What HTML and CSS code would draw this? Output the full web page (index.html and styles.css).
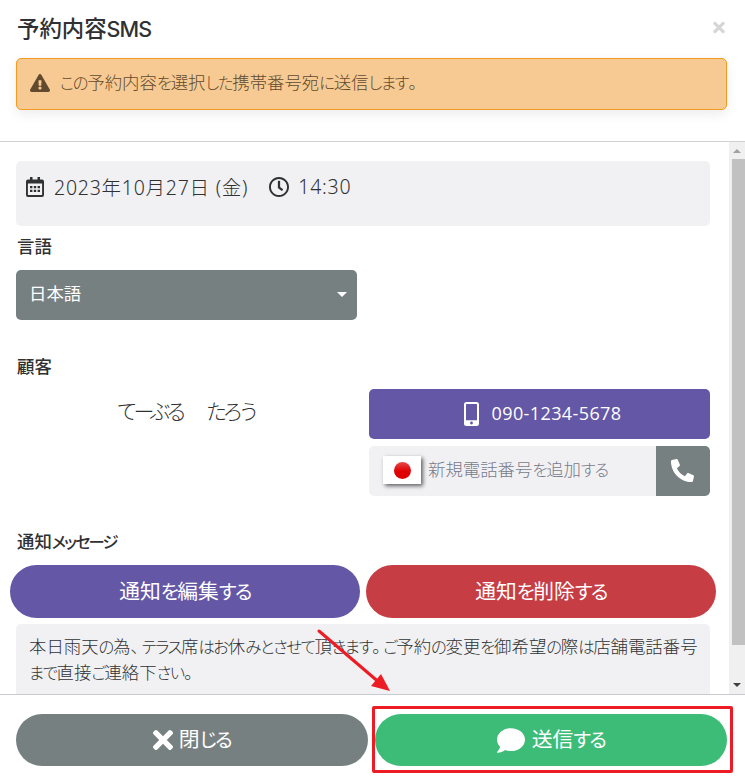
FILE: index.html
```html
<!DOCTYPE html>
<html lang="ja">
<head>
<meta charset="utf-8">
<title>予約内容SMS</title>
<link rel="stylesheet" href="styles.css">
</head>
<body>
<div class="modal">
  <header class="modal-header">
    <div class="title-row">
      <h1 class="title">予約内容<span class="latin">SMS</span></h1>
      <button class="close" aria-label="閉じる"><svg viewBox="0 0 352 512"><path d="M242.72 256l100.07-100.07c12.28-12.28 12.28-32.19 0-44.48l-22.24-22.24c-12.28-12.28-32.19-12.28-44.48 0L176 189.28 75.93 89.21c-12.28-12.28-32.19-12.28-44.48 0L9.21 111.45c-12.28 12.28-12.28 32.19 0 44.48L109.28 256 9.21 356.07c-12.28 12.28-12.28 32.19 0 44.48l22.24 22.24c12.28 12.28 32.2 12.28 44.48 0L176 322.72l100.07 100.07c12.28 12.28 32.2 12.28 44.48 0l22.24-22.24c12.28-12.28 12.28-32.19 0-44.48L242.72 256z"/></svg></button>
    </div>
    <div class="alert">
      <svg class="alert-icon" viewBox="0 0 576 512"><path d="M569.517 440.013C587.975 472.007 564.806 512 527.94 512H48.054c-36.937 0-59.999-40.055-41.577-71.987L246.423 23.985c18.467-32.009 64.72-31.951 83.154 0l239.94 416.028zM288 354c-25.405 0-46 20.595-46 46s20.595 46 46 46 46-20.595 46-46-20.595-46-46-46zm-43.673-165.346l7.418 136c.347 6.364 5.609 11.346 11.982 11.346h48.546c6.373 0 11.635-4.982 11.982-11.346l7.418-136c.375-6.874-5.098-12.654-11.982-12.654h-63.383c-6.884 0-12.356 5.78-11.981 12.654z"/></svg>
      <span class="alert-text"><span class="k">この</span>予約内容<span class="k">を</span>選択<span class="k">した</span>携帯番号宛<span class="k">に</span>送信<span class="k">します</span><span class="p">。</span></span>
    </div>
  </header>

  <div class="modal-body">
    <main class="content">
      <div class="datetime">
        <svg class="calendar" viewBox="0 0 18 20"><path fill-rule="evenodd" d="M4 0h2.500v2.500h5V0H14v2.500h2A2 2 0 0 1 18 4.500V18a2 2 0 0 1-2 2H2a2 2 0 0 1-2-2V4.500a2 2 0 0 1 2-2h2zM1.900 6.500v11.200q0 .4.400.4h13.400q.4 0 .4-.4V6.500z"/><path d="M4 9h2.400v2.200H4zM7.800 9h2.400v2.200H7.800zM11.600 9H14v2.200h-2.400zM4 12.800h2.400V15H4zM7.800 12.800h2.400V15H7.800zM11.600 12.800H14V15h-2.400z"/></svg>
        <span class="date">2023年10月27日 (金)</span>
        <svg class="clock" viewBox="8 8 496 496"><path d="M256 8C119 8 8 119 8 256s111 248 248 248 248-111 248-248S393 8 256 8zm0 448c-110.500 0-200-89.500-200-200S145.500 56 256 56s200 89.500 200 200-89.500 200-200 200zm61.800-104.400l-84.900-61.700c-3.100-2.300-4.900-5.900-4.900-9.700V116c0-6.600 5.400-12 12-12h32c6.600 0 12 5.400 12 12v141.700l66.800 48.600c5.400 3.900 6.500 11.400 2.600 16.800L334.600 349c-3.900 5.300-11.400 6.500-16.800 2.600z"/></svg>
        <span class="time">14:30</span>
      </div>

      <h2 class="label language-label">言語</h2>
      <div class="select"><span>日本語</span><i class="caret"></i></div>

      <h2 class="label customer-label">顧客</h2>
      <div class="customer">
        <div class="name"><span class="family">てーぶる</span>　<span class="given">たろう</span></div>
        <div class="phones">
          <button class="phone-button">
            <svg class="mobile" viewBox="0 0 15 24"><path fill-rule="evenodd" d="M2.500 0h10A2.500 2.500 0 0 1 15 2.500v19a2.500 2.500 0 0 1-2.500 2.500h-10A2.500 2.500 0 0 1 0 21.500v-19A2.500 2.500 0 0 1 2.500 0zM2 2.600v15.200q0 .5.500.5h10q.5 0 .5-.5V2.600q0-.5-.5-.5h-10q-.5 0-.5.5zM7.500 19.600a1.400 1.400 0 1 0 0 2.800 1.400 1.400 0 0 0 0-2.800z"/></svg>
            <span class="number">090-1234-5678</span>
          </button>
          <div class="phone-input">
            <div class="flag"><i></i></div>
            <span class="placeholder">新規電話番号<span class="k">を</span>追加<span class="k">する</span></span>
            <button class="call"><svg viewBox="0 0 512 512"><path transform="matrix(-1 0 0 1 512 0)" d="M493.400 24.600l-104-24c-11.300-2.600-22.900 3.300-27.500 13.900l-48 112c-4.200 9.800-1.400 21.300 6.900 28l60.600 49.600c-36 76.700-98.900 140.500-177.200 177.200l-49.600-60.600c-6.800-8.300-18.200-11.100-28-6.900l-112 48C3.900 366.500-2 378.100.6 389.400l24 104C27.100 504.200 36.700 512 48 512c256.100 0 464-207.500 464-464 0-11.200-7.700-20.900-18.600-23.400z"/></svg></button>
          </div>
        </div>
      </div>

      <h2 class="label message-label">通知<span class="kata">メッセージ</span></h2>
      <div class="actions">
        <button class="pill edit"><span>通知<span class="k">を</span>編集<span class="k">する</span></span></button>
        <button class="pill delete"><span>通知<span class="k">を</span>削除<span class="k">する</span></span></button>
      </div>
      <div class="message">
        <p>本日雨天<span class="k">の</span>為<span class="p">、</span><span class="k">テラス</span>席<span class="k">はお</span>休<span class="k">みとさせて</span>頂<span class="k">きます</span><span class="p">。</span><span class="k">ご</span>予約<span class="k">の</span>変更<span class="k">を</span>御希望<span class="k">の</span>際<span class="k">は</span>店舗電話番号</p>
        <p><span class="k">まで</span>直接<span class="k">ご</span>連絡下<span class="k">さい</span><span class="p">。</span></p>
      </div>
    </main>
    <div class="scrollbar">
      <i class="arrow-up"></i>
      <div class="thumb"></div>
      <i class="arrow-down"></i>
    </div>
  </div>

  <footer class="modal-footer">
    <button class="pill dismiss"><svg viewBox="0 80 352 352"><path d="M242.72 256l100.07-100.07c12.28-12.28 12.28-32.19 0-44.48l-22.24-22.24c-12.28-12.28-32.19-12.28-44.48 0L176 189.28 75.93 89.21c-12.28-12.28-32.19-12.28-44.48 0L9.21 111.45c-12.28 12.28-12.28 32.19 0 44.48L109.28 256 9.21 356.07c-12.28 12.28-12.28 32.19 0 44.48l22.24 22.24c12.28 12.28 32.2 12.28 44.48 0L176 322.72l100.07 100.07c12.28 12.28 32.2 12.28 44.48 0l22.24-22.24c12.28-12.28 12.28-32.19 0-44.48L242.72 256z"/></svg><span>閉<span class="k">じる</span></span></button>
    <button class="pill send"><svg viewBox="0 32 512 448"><path d="M256 32C114.600 32 0 125.100 0 240c0 49.600 21.400 95 57 130.700C44.500 421.100 2.700 466 2.200 466.500c-2.200 2.300-2.800 5.700-1.500 8.700S4.800 480 8 480c66.300 0 116-31.800 140.600-51.400 32.700 12.300 69 19.400 107.400 19.400 141.400 0 256-93.100 256-208S397.400 32 256 32z"/></svg><span>送信<span class="k">する</span></span></button>
  </footer>

  <div class="highlight"></div>
  <svg class="pointer" viewBox="0 0 76 66"><path d="M2 2L64 55" fill="none" stroke="#ed1c24" stroke-width="3" stroke-linecap="round"/><path d="M73 62L54 57L64 45z" fill="#ed1c24"/></svg>
</div>
</body>
</html>
```
FILE: styles.css
```css
* { box-sizing: border-box; }
body { margin: 0; background: #fff; color: #303133; font-family: "Noto Sans CJK JP", sans-serif; font-feature-settings: "palt"; }
h1, h2, p { margin: 0; }
button { border: 0; padding: 0; margin: 0; background: none; font: inherit; color: inherit; font-feature-settings: inherit; }
svg { display: block; fill: currentColor; flex: none; }
span, p, h1, h2 { white-space: nowrap; }

/* Tighter kana, looser punctuation */
.k { font-size: .94em; letter-spacing: -.08em; }
.kata { font-size: .94em; letter-spacing: -.12em; }
.p { letter-spacing: .14em; }

.modal { position: relative; width: 745px; height: 782px; overflow: hidden; display: flex; flex-direction: column; }

.modal-header { height: 142px; flex: none; padding: 0 18px 0 16px; border-bottom: 1px solid #cdd1d1; }
.title-row { height: 58px; display: flex; align-items: center; justify-content: space-between; padding-bottom: 2px; }
.title { font-size: 22.4px; font-weight: 500; line-height: 32px; padding-left: 1px; }
.latin { font-family: Inter, sans-serif; font-size: 21.500px; letter-spacing: -.9px; }
.close { color: #d5d6d6; padding-right: 2px; padding-bottom: 1px; }
.close svg { width: 12px; height: 17px; }
.alert { height: 52px; border: 1px solid #f59a23; border-radius: 5px; background: #f8ca93; color: #614a2e; padding: 0 0 3px 13px; display: flex; align-items: center; gap: 10px; box-shadow: 0 4px 12px rgba(0, 0, 0, .08); }
.alert-icon { width: 20px; height: 18px; }
.alert-text { font-size: 17.400px; font-weight: 300; padding-bottom: 2px; }

.modal-body { flex: 1; min-height: 0; display: flex; overflow: hidden; }
.content { flex: 1; min-width: 0; padding: 19px 19px 0 16px; }
.datetime { height: 65px; border-radius: 5px; background: #f1f1f4; display: flex; align-items: center; padding: 0 10px 13px; }
.calendar { width: 18px; height: 20px; }
.clock { width: 20px; height: 20px; margin-left: 21px; }
.date, .time { font-family: "Noto Sans", "Noto Sans CJK JP", sans-serif; font-size: 19.500px; font-weight: 300; letter-spacing: .75px; margin-left: 10px; padding-bottom: 2px; }
.time { margin-left: 9px; }

.label { font-size: 17.400px; font-weight: 500; line-height: 24px; padding-left: 1px; position: relative; top: -1px; }
.language-label { margin-top: 9px; }
.select { width: 341px; height: 50px; margin-top: 11px; padding: 0 10px 5px 13px; border-radius: 5px; background: #778080; color: #fff; font-size: 17.400px; display: flex; align-items: center; justify-content: space-between; }
.caret { border: 5.500px solid transparent; border-top-color: #fff; border-bottom: 0; margin-top: 4px; }

.customer-label { margin-top: 35px; }
.customer { display: grid; grid-template-columns: 341px 341px; gap: 12px; margin-top: 10px; height: 107px; }
.name { font-size: 21px; font-weight: 300; text-align: center; line-height: 42px; }
.family { letter-spacing: -.155em; }
.given { letter-spacing: -.09em; margin-left: 3px; }
.phones { display: flex; flex-direction: column; gap: 7px; }
.phone-button { height: 50px; border-radius: 5px; background: #6457a6; color: #fff; display: flex; align-items: center; justify-content: center; gap: 13px; padding-left: 6px; }
.mobile { width: 15px; height: 24px; }
.number { font-family: "Open Sans", sans-serif; font-size: 18px; font-weight: 500; letter-spacing: .4px; padding-bottom: 2px; }
.phone-input { height: 50px; border-radius: 5px; background: #f1f1f4; display: flex; align-items: center; overflow: hidden; }
.flag { width: 38px; height: 28px; margin: 0 7px 2px 14px; background: #fff; box-shadow: 2px 2px 4px rgba(0, 0, 0, .6); display: grid; place-items: center; }
.flag i { width: 17px; height: 17px; border-radius: 50%; background: linear-gradient(#e64b4b, #df0000 55%); }
.placeholder { flex: 1; font-size: 17.400px; font-weight: 300; color: #777b8b; padding-bottom: 5px; }
.call { width: 54px; height: 50px; background: #778080; color: #fff; display: grid; place-items: center; padding: 0 2px 2px 0; }
.call svg { width: 23px; height: 23px; }

.message-label { margin-top: 34px; }
.actions { display: flex; gap: 6px; margin: 11px -6px 0; }
.pill { height: 53px; border-radius: 27px; color: #fff; font-size: 20.800px; font-weight: 400; display: flex; align-items: center; justify-content: center; }
.pill > span { padding-bottom: 4px; }
.actions .pill { width: 350px; }
.edit { background: #6457a6; }
.delete { background: #c63d44; }
.message { height: 90px; margin-top: 6px; padding: 9px 13px; border-radius: 5px; background: #f1f1f4; font-size: 17.400px; font-weight: 300; line-height: 26px; }

.scrollbar { width: 16px; flex: none; background: #f0f0f0; display: flex; flex-direction: column; align-items: center; padding: 7px 0 7px; }
.arrow-up { border: 4px solid transparent; border-top: 0; border-bottom-color: #a0a0a0; }
.thumb { width: 13px; height: 486px; margin: 6px -1px 0 1px; background: #c1c1c1; }
.arrow-down { border: 4px solid transparent; border-bottom: 0; border-top-color: #404040; margin-top: auto; }

.modal-footer { height: 88px; flex: none; border-top: 1px solid #cacad0; display: flex; gap: 7px; padding: 19px 18px 0 16px; }
.modal-footer .pill { width: 352px; height: 52px; }
.dismiss { background: #778080; gap: 6px; }
.dismiss svg { width: 20px; height: 20px; }
.send { background: #3dbc78; gap: 7px; }
.send svg { width: 28px; height: 25px; }

.highlight { position: absolute; left: 372px; top: 706px; width: 361px; height: 67px; border: 3px solid #ed1c24; border-radius: 2px; }
.pointer { position: absolute; left: 317px; top: 629px; width: 76px; height: 66px; }
```
